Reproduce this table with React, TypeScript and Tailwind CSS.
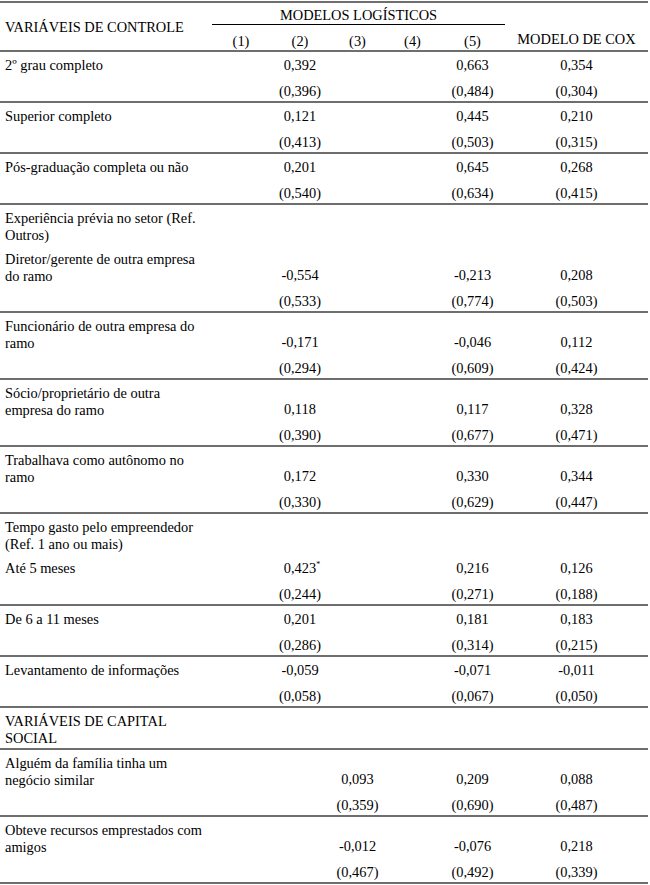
import React from "react";

type Row = {
  labels: string[][];
  coef?: string[];
  se?: string[];
  sup?: number;
};

const rows: Row[] = [
  { labels: [["2º grau completo"]], coef: ["", "0,392", "", "", "0,663", "0,354"], se: ["", "(0,396)", "", "", "(0,484)", "(0,304)"] },
  { labels: [["Superior completo"]], coef: ["", "0,121", "", "", "0,445", "0,210"], se: ["", "(0,413)", "", "", "(0,503)", "(0,315)"] },
  { labels: [["Pós-graduação completa ou não"]], coef: ["", "0,201", "", "", "0,645", "0,268"], se: ["", "(0,540)", "", "", "(0,634)", "(0,415)"] },
  {
    labels: [["Experiência prévia no setor (Ref.", "Outros)"], ["Diretor/gerente de outra empresa", "do ramo"]],
    coef: ["", "-0,554", "", "", "-0,213", "0,208"],
    se: ["", "(0,533)", "", "", "(0,774)", "(0,503)"],
  },
  { labels: [["Funcionário de outra empresa do", "ramo"]], coef: ["", "-0,171", "", "", "-0,046", "0,112"], se: ["", "(0,294)", "", "", "(0,609)", "(0,424)"] },
  { labels: [["Sócio/proprietário de outra", "empresa do ramo"]], coef: ["", "0,118", "", "", "0,117", "0,328"], se: ["", "(0,390)", "", "", "(0,677)", "(0,471)"] },
  { labels: [["Trabalhava como autônomo no", "ramo"]], coef: ["", "0,172", "", "", "0,330", "0,344"], se: ["", "(0,330)", "", "", "(0,629)", "(0,447)"] },
  {
    labels: [["Tempo gasto pelo empreendedor", "(Ref. 1 ano ou mais)"], ["Até 5 meses"]],
    coef: ["", "0,423", "", "", "0,216", "0,126"],
    se: ["", "(0,244)", "", "", "(0,271)", "(0,188)"],
    sup: 1,
  },
  { labels: [["De 6 a 11 meses"]], coef: ["", "0,201", "", "", "0,181", "0,183"], se: ["", "(0,286)", "", "", "(0,314)", "(0,215)"] },
  { labels: [["Levantamento de informações"]], coef: ["", "-0,059", "", "", "-0,071", "-0,011"], se: ["", "(0,058)", "", "", "(0,067)", "(0,050)"] },
  { labels: [["VARIÁVEIS DE CAPITAL", "SOCIAL"]] },
  { labels: [["Alguém da família tinha um", "negócio similar"]], coef: ["", "", "0,093", "", "0,209", "0,088"], se: ["", "", "(0,359)", "", "(0,690)", "(0,487)"] },
  { labels: [["Obteve recursos emprestados com", "amigos"]], coef: ["", "", "-0,012", "", "-0,076", "0,218"], se: ["", "", "(0,467)", "", "(0,492)", "(0,339)"] },
];

const grid = "grid grid-cols-[212px_58px_60px_55px_55px_65px_1fr]";

function Group({ row }: { row: Row }) {
  const blocks = row.labels;
  return (
    <div className={`border-b-2 border-[#6e6e6e] pt-[5px] ${row.se ? "pb-[1px]" : "pb-[2px]"}`}>
      {blocks.map((lines, bi) => {
        const last = bi === blocks.length - 1;
        return (
          <div key={bi} className={`${grid} items-end ${bi > 0 ? "mt-[8px]" : ""}`}>
            <div className="pl-[5px]">
              {lines.map((l, i) => (
                <div key={i} className={lines.length > 1 ? "leading-[16.5px]" : "leading-[17px]"}>
                  {l}
                </div>
              ))}
            </div>
            {last && row.coef
              ? row.coef.map((c, i) => (
                  <div key={i} className="text-center leading-[17px]">
                    {c}
                    {row.sup === i && c ? <span className="absolute text-[8px] leading-[8px] mt-[1px]">*</span> : null}
                  </div>
                ))
              : null}
          </div>
        );
      })}
      {row.se ? (
        <div className={`${grid} mt-[9px] leading-[17px]`}>
          <div />
          {row.se.map((c, i) => (
            <div key={i} className="text-center">
              {c}
            </div>
          ))}
        </div>
      ) : null}
    </div>
  );
}

export default function App() {
  return (
    <div className="w-[650px] h-[885px] bg-white text-black overflow-hidden font-['Liberation_Serif','Times_New_Roman',serif]">
      <div className="w-[648px] pt-[1px] text-[14.4px] leading-[17px]">
        <div className="border-t-2 border-b-2 border-[#6e6e6e] h-[51px] flex">
          <div className="w-[212px] flex items-center pl-[5px] pt-[1px]">VARIÁVEIS DE CONTROLE</div>
          <div className="w-[293px] flex flex-col">
            <div className="h-[25px] border-b border-black flex items-end justify-center">MODELOS LOGÍSTICOS</div>
            <div className="grid grid-cols-[58px_60px_55px_55px_65px] pt-[8px]">
              <div className="text-center">(1)</div>
              <div className="text-center">(2)</div>
              <div className="text-center">(3)</div>
              <div className="text-center">(4)</div>
              <div className="text-center">(5)</div>
            </div>
          </div>
          <div className="flex-1 flex items-end justify-center pb-[2px]">MODELO DE COX</div>
        </div>
        {rows.map((r, i) => (
          <Group key={i} row={r} />
        ))}
      </div>
    </div>
  );
}
